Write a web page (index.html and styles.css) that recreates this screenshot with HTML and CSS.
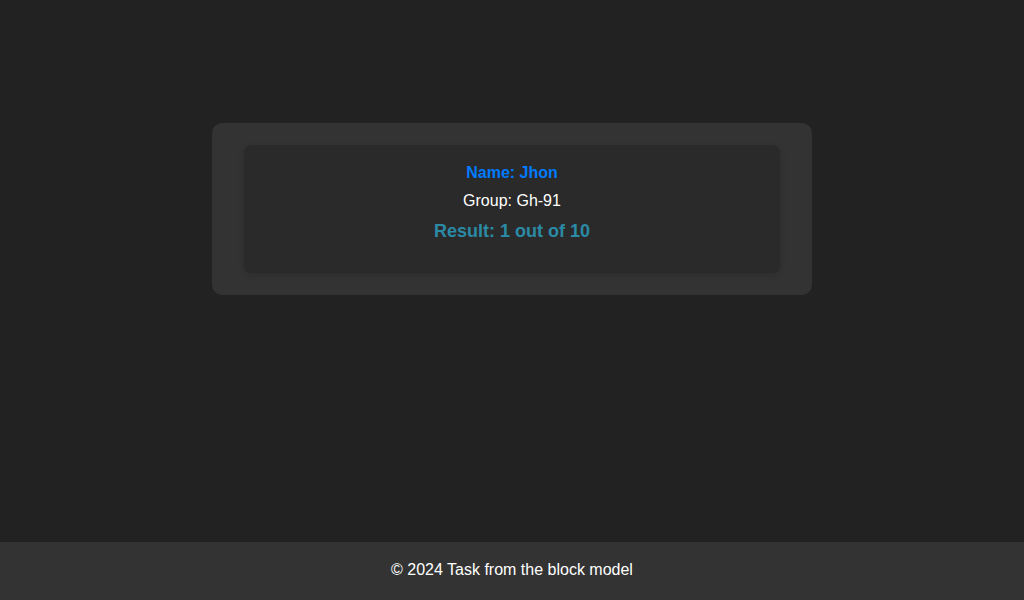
FILE: index.html
```html
<!DOCTYPE html>
<html lang="en">
<head>
<meta charset="utf-8">
<title>Student result</title>
<link rel="stylesheet" href="styles.css">
</head>
<body>
<main class="main">
  <section class="card">
    <div class="inner">
      <p class="name">Name: Jhon</p>
      <p class="group">Group: Gh-91</p>
      <p class="result">Result: 1 out of 10</p>
    </div>
  </section>
</main>
<footer class="footer">© 2024 Task from the block model</footer>
</body>
</html>
```
FILE: styles.css
```css
* { box-sizing: border-box; }
html, body { height: 100%; }
body {
  margin: 0;
  background: #222222;
  color: #ffffff;
  font-family: "Liberation Sans", Arial, sans-serif;
  font-size: 16px;
  display: flex;
  flex-direction: column;
}
.main {
  flex: 1;
  display: flex;
  justify-content: center;
  align-items: flex-start;
  padding-top: 123px;
}
.card {
  width: 600px;
  background: #333333;
  border-radius: 10px;
  padding: 22px 32px;
}
.inner {
  background: #2a2a2a;
  border-radius: 8px;
  box-shadow: 0 2px 6px rgba(0,0,0,0.15);
  padding: 19px 20px 31px;
  text-align: center;
}
.inner p { margin: 0; }
.name {
  color: #007bff;
  font-weight: bold;
  margin-bottom: 10px !important;
}
.group {
  margin-bottom: 11px !important;
}
.result {
  color: #2b8aa6;
  font-weight: bold;
  font-size: 18px;
}
.footer {
  background: #333333;
  text-align: center;
  padding: 19px 0 21px;
  height: 58px;
}
```
